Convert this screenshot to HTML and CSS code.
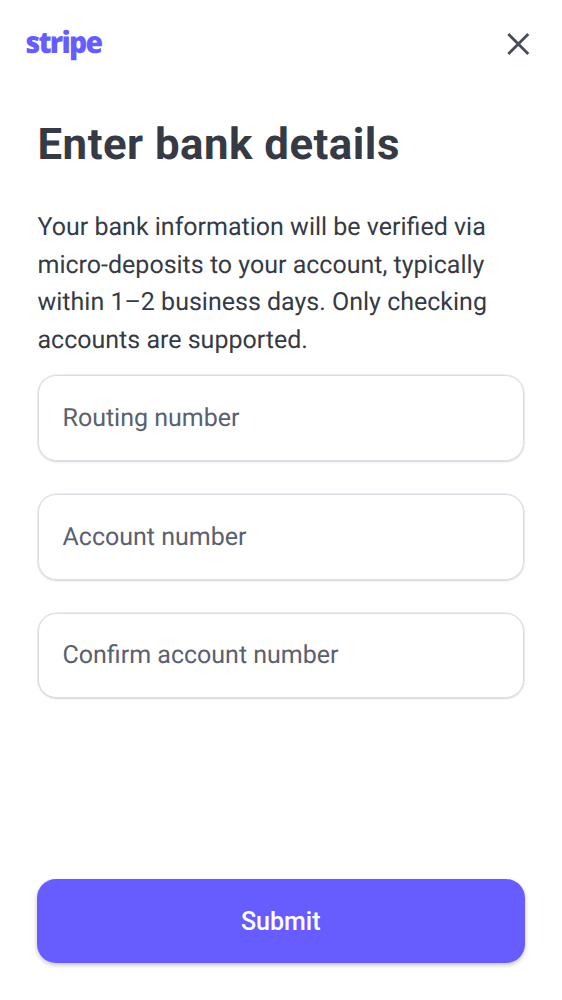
FILE: index.html
```html
<!DOCTYPE html>
<html lang="en">
<head>
<meta charset="utf-8">
<title>Enter bank details</title>
<link rel="stylesheet" href="styles.css">
</head>
<body>
<div class="screen">
  <header class="topbar">
    <svg class="logo" viewBox="0 0 78 40" role="img" aria-label="stripe"><text class="wordmark" x="0.5" y="28.5" textLength="76" lengthAdjust="spacingAndGlyphs">stripe</text></svg>
    <button class="close" aria-label="Close"><svg viewBox="0 0 24 24"><path d="M2.3 2L22.3 22M22.3 2L2.3 22"/></svg></button>
  </header>
  <main class="content">
    <h1 class="title">Enter bank details</h1>
    <p class="description">Your bank information will be verified via<br>micro-deposits to your account, typically<br>within 1–2 business days. Only checking<br>accounts are supported.</p>
    <form class="fields">
      <label class="field">Routing number</label>
      <label class="field">Account number</label>
      <label class="field">Confirm account number</label>
    </form>
  </main>
  <footer class="footer"><button class="submit">Submit</button></footer>
</div>
</body>
</html>
```
FILE: styles.css
```css
* { box-sizing: border-box; }
body { margin: 0; background: #fff; font-family: Roboto, sans-serif; color: #353a44; text-rendering: geometricPrecision; }
.screen { display: flex; flex-direction: column; height: 1000px; }
.topbar { display: flex; justify-content: space-between; align-items: center; height: 88px; padding: 0 32px 0 25px; }
.logo { width: 78px; height: 40px; overflow: visible; }
.wordmark { font-family: "Open Sans", sans-serif; font-weight: 800; font-size: 30px; letter-spacing: -1.8px; fill: #675dff; }
.close { display: flex; padding: 0; border: 0; background: none; }
.close svg { width: 24px; height: 24px; fill: none; stroke: #474e5a; stroke-width: 2.8; }
.content { padding: 28px 37.5px 0; }
.title { margin: 0; font-size: 43.75px; line-height: 56px; font-weight: 700; letter-spacing: 0.5px; white-space: nowrap; }
.description { margin: 37px 0 0; font-size: 25px; line-height: 37.5px; white-space: nowrap; }
.fields { display: flex; flex-direction: column; gap: 33px; margin-top: 16px; padding-right: 0.5px; }
.field { display: flex; align-items: center; height: 85.75px; padding: 1px 24px 0; border: 1px solid #d8dee4; border-radius: 18.5px; color: #596171; font-size: 25px; box-shadow: 0 0 0 0.5px #d8dee4, 0 1px 2px rgba(0, 0, 0, 0.16); }
.footer { margin-top: auto; padding: 0 37.5px 37.5px 37px; }
.submit { display: block; width: 487.5px; height: 83.5px; padding: 1.5px 0 0; border: 0; border-radius: 19px; background: #675dff; color: #fff; font: 500 25px Roboto, sans-serif; box-shadow: 0 2px 4px rgba(0, 0, 0, 0.25); }
```
